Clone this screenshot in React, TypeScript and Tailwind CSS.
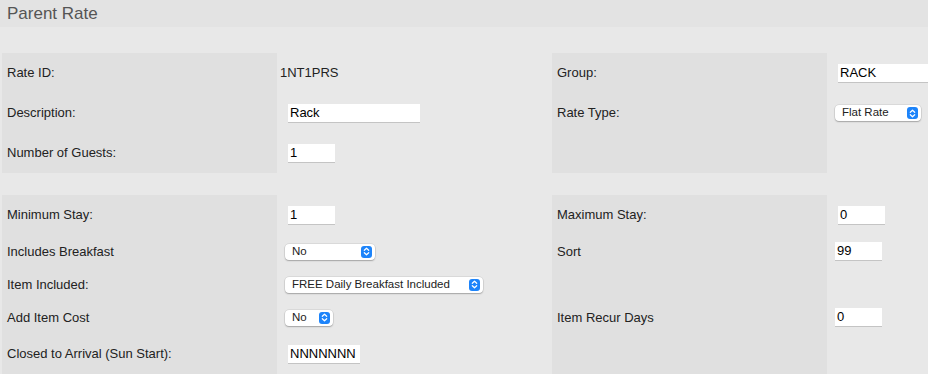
type Row = {
  label: string
  h: number
  value?: React.ReactNode
}

type Side = {
  rows: Row[]
}

function TextBox({ value, width, ml = 11 }: { value: string; width: number; ml?: number }) {
  return (
    <div
      className="h-[19px] bg-white border-b border-[#c4c4c4] pl-[2px] flex items-center text-[13px] text-black"
      style={{ width, marginLeft: ml }}
    >
      {value}
    </div>
  )
}

function SelectBox({ value, width, ml = 8 }: { value: string; width: number; ml?: number }) {
  return (
    <div
      className="h-[16px] bg-white rounded-[4px] shadow-[0_0_0_0.5px_rgba(0,0,0,0.12),0_1px_1.5px_rgba(0,0,0,0.25)] flex items-center justify-between pl-[7px] pr-[3px] text-[11.5px] text-[#222]"
      style={{ width, marginLeft: ml }}
    >
      <span className="leading-none">{value}</span>
      <span className="w-[11px] h-[12px] rounded-[3px] bg-[#1d84fa] flex items-center justify-center">
        <svg width="7" height="9" viewBox="0 0 7 9" fill="none">
          <path d="M1.3 3.3 L3.5 1.2 L5.7 3.3" stroke="white" strokeWidth="1.2" strokeLinecap="round" strokeLinejoin="round" />
          <path d="M1.3 5.7 L3.5 7.8 L5.7 5.7" stroke="white" strokeWidth="1.2" strokeLinecap="round" strokeLinejoin="round" />
        </svg>
      </span>
    </div>
  )
}

function LabelCol({ rows }: Side) {
  return (
    <div className="w-[275px] shrink-0 bg-[#e0e0e0] flex flex-col">
      {rows.map((r, i) => (
        <div key={i} className="flex items-center pl-[5px] text-[13px] text-[#222]" style={{ height: r.h }}>
          {r.label}
        </div>
      ))}
    </div>
  )
}

function ValueCol({ rows, width }: Side & { width?: number }) {
  return (
    <div className="flex flex-col shrink-0" style={{ width }}>
      {rows.map((r, i) => (
        <div key={i} className="flex items-center" style={{ height: r.h }}>
          {r.value}
        </div>
      ))}
    </div>
  )
}

function Section({ left, right, grow }: { left: Row[]; right: Row[]; grow?: boolean }) {
  return (
    <div className={grow ? 'flex pl-[2px] flex-1' : 'flex pl-[2px]'}>
      <LabelCol rows={left} />
      <ValueCol rows={left} width={275} />
      <LabelCol rows={right} />
      <div className="flex-1 overflow-hidden">
        <ValueCol rows={right} width={120} />
      </div>
    </div>
  )
}

export default function App() {
  const topLeft: Row[] = [
    { label: 'Rate ID:', h: 40, value: <span className="ml-[3px] text-[13px] text-[#222]">1NT1PRS</span> },
    { label: 'Description:', h: 40, value: <TextBox value="Rack" width={132} /> },
    { label: 'Number of Guests:', h: 40, value: <TextBox value="1" width={47} /> },
  ]
  const topRight: Row[] = [
    { label: 'Group:', h: 40, value: <TextBox value="RACK" width={110} /> },
    { label: 'Rate Type:', h: 40, value: <SelectBox value="Flat Rate" width={86} /> },
    { label: '', h: 40 },
  ]
  const bottomLeft: Row[] = [
    { label: 'Minimum Stay:', h: 40, value: <TextBox value="1" width={47} /> },
    { label: 'Includes Breakfast', h: 33, value: <SelectBox value="No" width={90} /> },
    { label: 'Item Included:', h: 33, value: <SelectBox value="FREE Daily Breakfast Included" width={198} /> },
    { label: 'Add Item Cost', h: 33, value: <SelectBox value="No" width={48} /> },
    { label: 'Closed to Arrival (Sun Start):', h: 40, value: <TextBox value="NNNNNNN" width={72} /> },
  ]
  const bottomRight: Row[] = [
    { label: 'Maximum Stay:', h: 40, value: <TextBox value="0" width={47} /> },
    { label: 'Sort', h: 33, value: <TextBox value="99" width={47} ml={8} /> },
    { label: '', h: 33 },
    { label: 'Item Recur Days', h: 33, value: <TextBox value="0" width={47} ml={8} /> },
    { label: '', h: 40 },
  ]

  return (
    <div
      className="w-[928px] h-[374px] overflow-hidden bg-[#e8e8e8] flex flex-col"
      style={{ fontFamily: '"Liberation Sans", Arial, sans-serif' }}
    >
      <div className="h-[27px] shrink-0 bg-[#e3e3e3] pl-[7px] flex items-center text-[17px] text-[#555]">
        Parent Rate
      </div>
      <div className="h-[26px] shrink-0" />
      <Section left={topLeft} right={topRight} />
      <div className="h-[22px] shrink-0" />
      <Section left={bottomLeft} right={bottomRight} grow />
    </div>
  )
}
